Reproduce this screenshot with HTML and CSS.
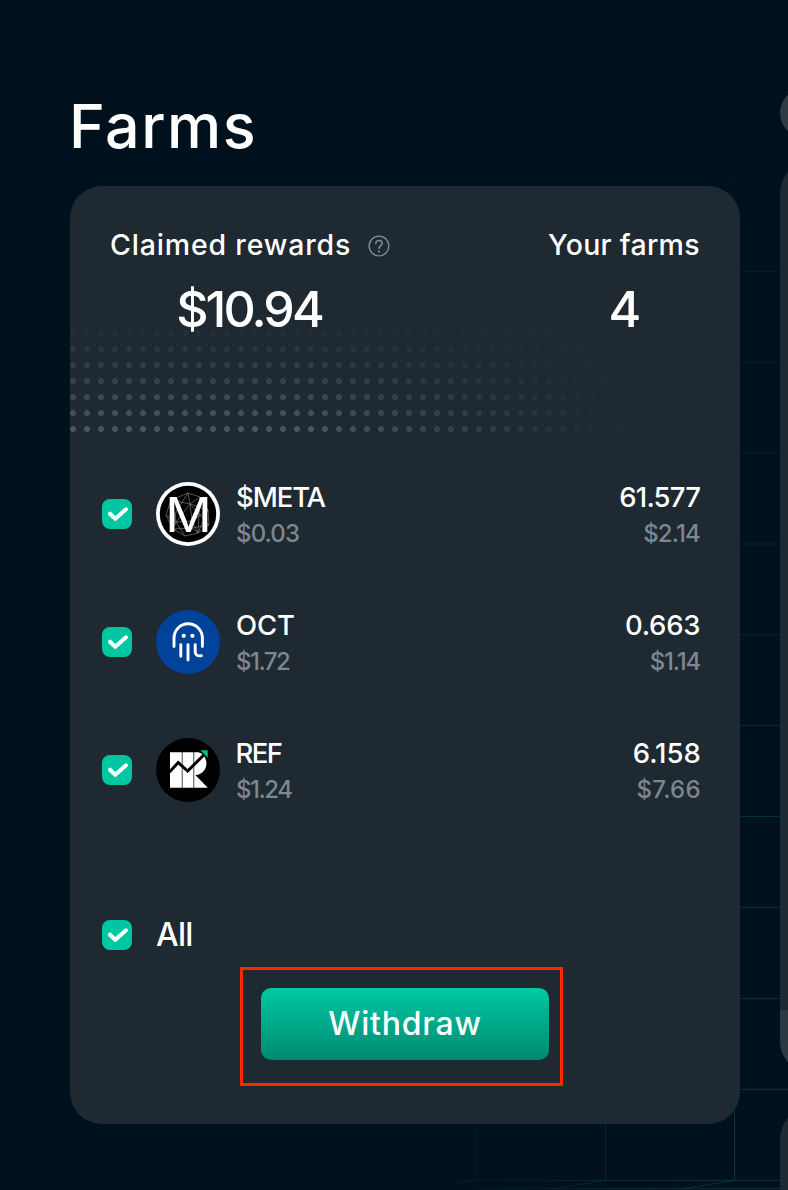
FILE: index.html
```
<!DOCTYPE html>
<html lang="en">
<head>
<meta charset="utf-8">
<title>Farms</title>
<link rel="stylesheet" href="styles.css">
</head>
<body>
<svg class="grid" viewBox="0 0 788 1190" fill="none" aria-hidden="true">
  <defs>
    <linearGradient id="rise" gradientUnits="userSpaceOnUse" x1="0" y1="110" x2="0" y2="900">
      <stop offset="0" stop-color="#0a4044" stop-opacity=".1"/>
      <stop offset="1" stop-color="#0a4044" stop-opacity=".66"/>
    </linearGradient>
    <linearGradient id="floor" gradientUnits="userSpaceOnUse" x1="430" y1="0" x2="740" y2="0">
      <stop offset="0" stop-color="#0a4044" stop-opacity=".1"/>
      <stop offset="1" stop-color="#0a4044" stop-opacity=".7"/>
    </linearGradient>
  </defs>
  <path stroke="url(#rise)" d="M734.5 120V1100M700 180.5H788M700 271.5H788M700 362.5H788M700 453H788M700 544H788M700 635H788M700 725.5H788M700 816.5H788M700 907.5H788M700 998.5H788M700 1089.5H788"/>
  <path stroke="url(#floor)" d="M476.500 1100V1180M605.500 1100V1180M734.500 1100V1180M454 1180.500H788M454 1188.500H788M476 1180.500L455 1184M605 1180.500L550 1189M734 1180.500L680 1189"/>
</svg>
<svg class="defs" aria-hidden="true">
  <symbol id="tick" viewBox="0 0 30 30"><path d="M8 14.700 13.300 19.800 24 10.300" fill="none" stroke="#fff" stroke-width="4" stroke-linecap="round" stroke-linejoin="round"/></symbol>
</svg>
<div class="page">
  <main class="farms">
    <h1 class="title">Farms</h1>
    <section class="card">
      <header class="summary">
        <div class="stat">
          <div class="label"><span class="claimed">Claimed rewards</span>
            <svg class="help" viewBox="0 0 22 22" fill="none" stroke="#808b93"><circle cx="11" cy="11" r="9.900" stroke-width="1.400"/><path d="M7.800 8.500c0-1.900 1.400-3.100 3.200-3.100s3.200 1.200 3.200 2.900c0 2.300-3.200 2.500-3.200 5.300" stroke-width="1.500" stroke-linecap="round"/><circle cx="11" cy="16.600" r="1.100" fill="#808b93" stroke="none"/></svg>
          </div>
          <div class="figure money">$10.94</div>
        </div>
        <div class="stat">
          <div class="label yours">Your farms</div>
          <div class="figure count">4</div>
        </div>
      </header>
      <div class="tokens">
        <div class="token">
          <span class="check"><svg><use href="#tick"/></svg></span>
          <svg class="logo" viewBox="0 0 64 64">
            <circle cx="32" cy="32" r="32" fill="#fff"/><circle cx="32" cy="32" r="28.200"/>
            <path d="M32 11 44 15 52 28 53 43 42 51 29 54 17 47 10 33 15 18ZM32 11 34 22 15 18 20 40 10 33M34 22 52 28 36 39 20 40 17 47 36 46 42 51 36 39 34 22 20 40 29 54M44 15 34 22 53 43 36 46M32 11 20 30 17 47M44 15 42 51 52 28" fill="none" stroke="#8d8d8d" stroke-width=".6"/>
            <text class="meta-m" x="9.300" y="50.300" textLength="46.500" lengthAdjust="spacingAndGlyphs">M</text>
          </svg>
          <div class="info"><div class="main t-meta">$META</div><div class="sub t-003">$0.03</div></div>
          <div class="info amount"><div class="main t-61">61.577</div><div class="sub t-214">$2.14</div></div>
        </div>
        <div class="token">
          <span class="check"><svg><use href="#tick"/></svg></span>
          <svg class="logo" viewBox="0 0 64 64">
            <circle cx="32" cy="32" r="32" fill="#01439b"/>
            <g fill="none" stroke="#fff" stroke-width="2.900" stroke-linecap="round"><path d="M18 36.500V28a14.200 14.200 0 0 1 28.400 0V36.500"/><path d="M24.800 34.800V46.300M32 34.800V50M39.200 34.800V41.500Q39.200 46.500 45.300 45.800"/></g>
            <circle cx="27.700" cy="25.800" r="2.100" fill="#fff"/><circle cx="36.400" cy="25.800" r="2.100" fill="#fff"/>
          </svg>
          <div class="info"><div class="main t-oct">OCT</div><div class="sub t-172">$1.72</div></div>
          <div class="info amount"><div class="main t-066">0.663</div><div class="sub t-114">$1.14</div></div>
        </div>
        <div class="token">
          <span class="check"><svg><use href="#tick"/></svg></span>
          <svg class="logo" viewBox="0 0 64 64">
            <circle cx="32" cy="32" r="32"/>
            <path fill="#fff" d="M14 14.300H25.800V49.700H14ZM26.500 14.300H37.500V49.700H26.500ZM38.200 14.300H42A9 9 0 0 1 49.300 20.500 11.500 11.500 0 0 1 39.300 37L51.800 49.700H38.200Z"/>
            <path d="M13.500 34 22.200 24.600 31.700 33 48 16.800" fill="none" stroke="#000" stroke-width="3"/>
            <path fill="#00c08b" stroke="#000" stroke-width=".6" d="M43.800 12H52V20.500Z"/>
          </svg>
          <div class="info"><div class="main t-ref">REF</div><div class="sub t-124">$1.24</div></div>
          <div class="info amount"><div class="main t-615">6.158</div><div class="sub t-766">$7.66</div></div>
        </div>
      </div>
      <div class="all"><span class="check"><svg><use href="#tick"/></svg></span><span class="all-label">All</span></div>
      <div class="action"><button class="withdraw">Withdraw</button></div>
    </section>
  </main>
  <aside class="side">
    <div class="pill"></div>
    <div class="panel"><div class="panel-foot"></div></div>
    <div class="panel next"></div>
  </aside>
</div>
</body>
</html>
```
FILE: styles.css
```
*, *::before, *::after { box-sizing: border-box; }
body { margin: 0; width: 788px; height: 1190px; overflow: hidden; background: #00111e; color: #fff; font-family: Inter, "Open Sans", sans-serif; font-weight: 500; }
svg { display: block; }
.defs { position: absolute; width: 0; height: 0; }
.grid { position: absolute; inset: 0; width: 788px; height: 1190px; }
.page { position: relative; display: flex; gap: 40px; height: 1190px; padding: 88px 0 0 70px; overflow: hidden; }
.farms { flex: 0 0 670px; }
.title { margin: 0 0 22px -1px; font-size: 61px; line-height: 76px; font-weight: 500; letter-spacing: 1.5px; }
.card { height: 938px; border-radius: 32px; background: #1e2931; overflow: hidden; }
.summary { position: relative; display: flex; justify-content: space-between; height: 250px; padding: 39px 40px 0; }
.summary::after { content: ""; position: absolute; left: 0; top: 139px; width: 560px; height: 112px; background: radial-gradient(circle, #59636a 2.6px, transparent 3.4px) -4px 0 / 14px 16px; -webkit-mask: linear-gradient(#0000000c, #000c), linear-gradient(82deg, #000 42%, #0000 97%); mask: linear-gradient(#0000000c, #000c), linear-gradient(82deg, #000 42%, #0000 97%); -webkit-mask-composite: source-in; mask-composite: intersect; }
.stat { position: relative; z-index: 1; }
.label { display: flex; align-items: center; justify-content: space-between; width: 280px; height: 40px; margin-bottom: 14px; font-size: 28.5px; line-height: 40px; white-space: nowrap; }
.claimed { letter-spacing: .83px; }
.yours { width: 152px; letter-spacing: .3px; }
.help { width: 22px; height: 22px; margin-top: 2px; }
.figure { font-size: 50px; line-height: 60px; text-align: center; }
.money { letter-spacing: -2.9px; margin-left: -2px; }
.count { margin-left: 2px; }
.tokens { padding-top: 14px; }
.token { display: flex; align-items: center; height: 128px; padding: 0 40px 0 32px; }
.check { flex: none; width: 30px; height: 30px; border-radius: 8px; background: #00c6a2; }
.check svg { width: 30px; height: 30px; }
.logo { width: 64px; height: 64px; margin: 0 16px 0 24px; }
.meta-m { fill: #fff; font-size: 48.5px; font-weight: 400; }
.info { padding-top: 5px; white-space: nowrap; }
.amount { display: flex; flex-direction: column; align-items: flex-end; margin-left: auto; }
.main { font-size: 27.5px; line-height: 35px; }
.sub { font-size: 24px; line-height: 38px; color: #7c8790; }
.t-meta { letter-spacing: -1.1px; }
.t-oct { letter-spacing: -.13px; }
.t-ref { letter-spacing: -1.6px; margin-left: -.5px; }
.t-003 { letter-spacing: -.87px; }
.t-172 { letter-spacing: -1.5px; }
.t-124 { letter-spacing: -1.5px; }
.t-61 { letter-spacing: -.8px; margin-right: -.2px; }
.t-066 { letter-spacing: -.2px; margin-right: -.4px; }
.t-615 { margin-right: -.8px; }
.t-214 { letter-spacing: -.86px; }
.t-114 { letter-spacing: -1.2px; }
.t-766 { letter-spacing: .26px; margin-right: -.8px; }
.all { display: flex; align-items: center; gap: 24px; height: 40px; margin: 81px 0 33px; padding-left: 32px; }
.all-label { font-size: 32px; line-height: 40px; letter-spacing: -.7px; }
.action { position: relative; width: 288px; height: 72px; margin-left: 191px; }
.action::after { content: ""; position: absolute; left: -21px; top: -21px; width: 323px; height: 119px; border: 3px solid #ff2600; }
.withdraw { display: block; width: 100%; height: 100%; padding: 0; border: 0; border-radius: 10px; background: linear-gradient(#00c8a3, #008a70); color: #fff; font: 500 32px/72px Inter, "Open Sans", sans-serif; letter-spacing: .8px; }
.side { flex: 0 0 200px; }
.pill { width: 200px; height: 50px; border-radius: 25px; background: #2e3b44; }
.panel { display: flex; flex-direction: column; justify-content: flex-end; height: 912px; margin-top: 23px; border-radius: 32px; background: #1e2931; overflow: hidden; }
.panel-foot { height: 63px; background: #2c3943; }
.next { height: 200px; margin-top: 34px; }
```
